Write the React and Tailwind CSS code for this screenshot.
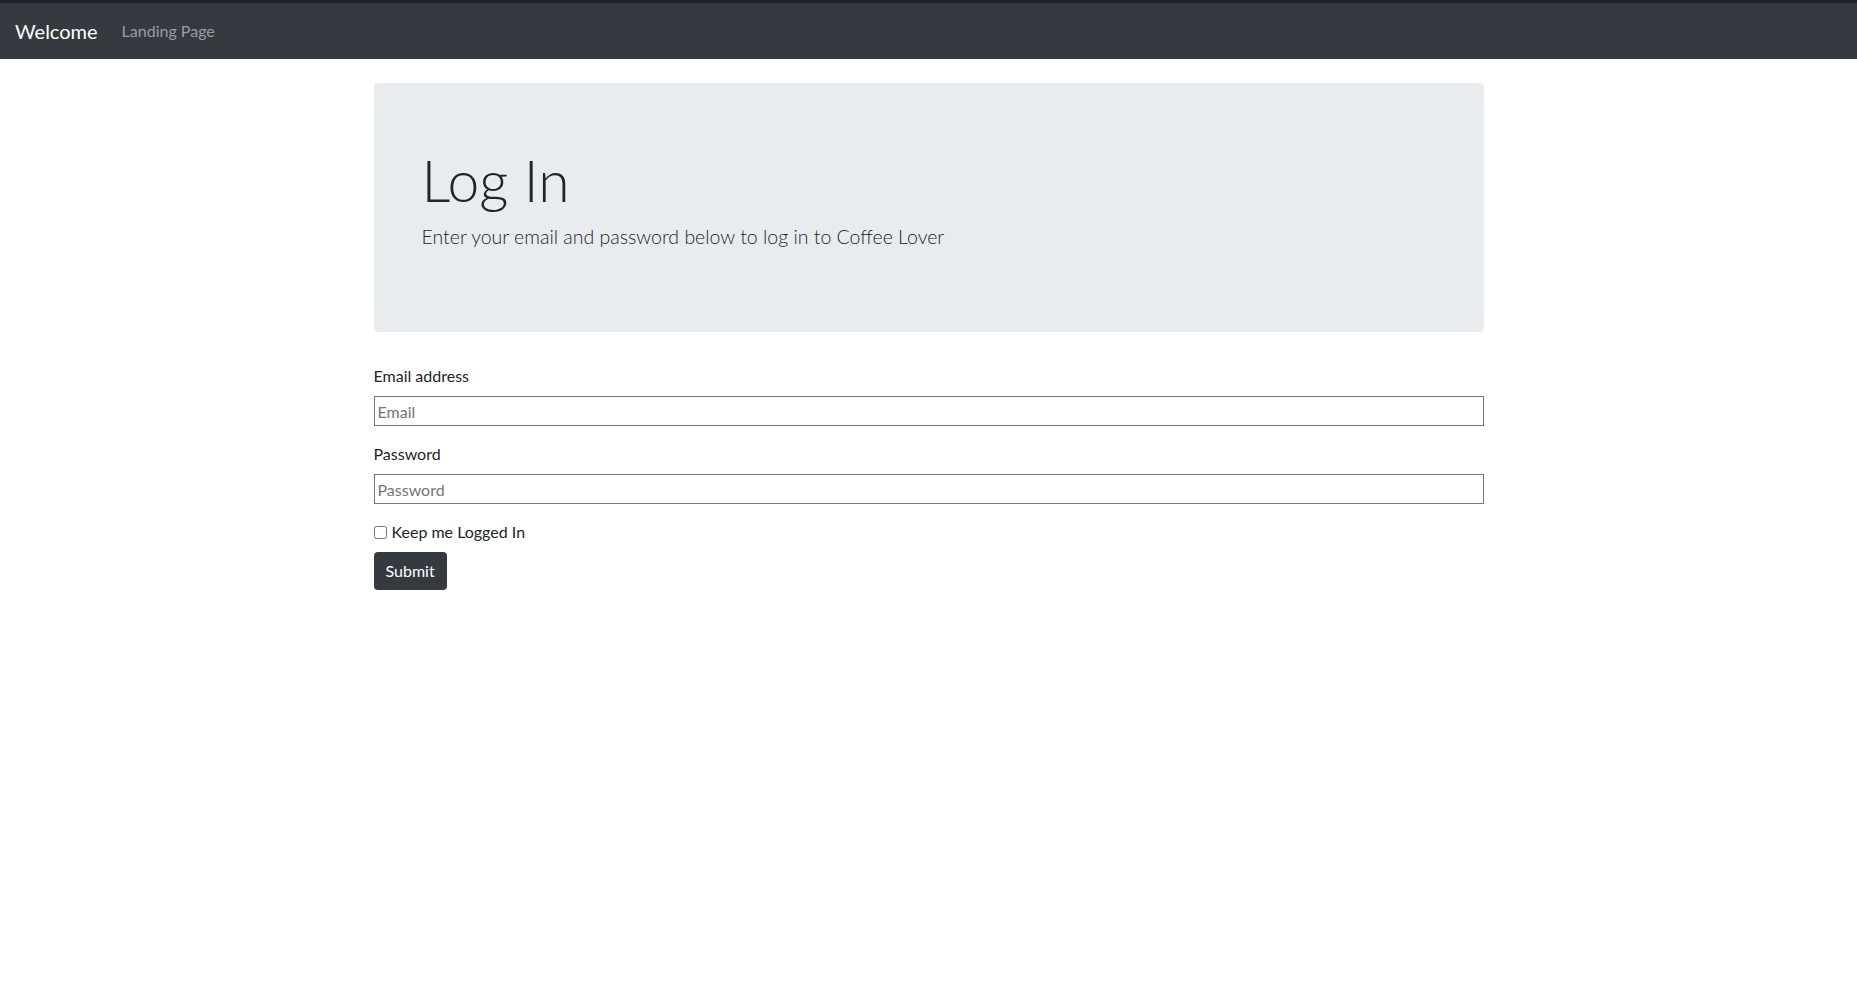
import React from 'react';

const font = { fontFamily: '"Segoe UI", Lato, "Noto Sans", sans-serif' };

const Navbar = () => (
    <nav className="bg-[#343a40] border-t-[3px] border-[#1d2024] h-[59px] flex items-center px-[15px]">
        <a href="#" className="text-white text-[20px] leading-[30px] mr-4">Welcome</a>
        <a href="#" className="text-white/50 text-base px-2">Landing Page</a>
    </nav>
);

const LoginForm = () => (
    <form className="text-[#212529] text-base">
        <div className="mb-4">
            <label className="block leading-6 mb-2">Email address</label>
            <input
                type="email"
                placeholder="Email"
                className="block w-full h-[30px] border border-[#767676] px-[3px] placeholder:text-[#757575] outline-none"
            />
        </div>
        <div className="mb-4">
            <label className="block leading-6 mb-2">Password</label>
            <input
                type="password"
                placeholder="Password"
                className="block w-full h-[30px] border border-[#767676] px-[3px] placeholder:text-[#757575] outline-none"
            />
        </div>
        <div className="flex items-center h-6 mb-2">
            <input type="checkbox" className="w-[13px] h-[13px] m-0 mr-[5px]" />
            <label>Keep me Logged In</label>
        </div>
        <button type="button" className="bg-[#343a40] text-white h-[38px] px-3 rounded text-base">
            Submit
        </button>
    </form>
);

export default function App() {
    return (
        <div className="min-h-screen bg-white" style={font}>
            <Navbar />
            <div className="w-[1110px] mx-auto pt-6">
                <div className="bg-[#e9ecef] rounded pt-16 pb-16 px-12 mb-8">
                    <h1 className="text-[57px] leading-[67px] font-light text-[#212529] mb-2">Log In</h1>
                    <p className="text-[19.5px] leading-[30px] font-light text-[#212529] mb-4">
                        Enter your email and password below to log in to Coffee Lover
                    </p>
                </div>
                <LoginForm />
            </div>
        </div>
    );
}
